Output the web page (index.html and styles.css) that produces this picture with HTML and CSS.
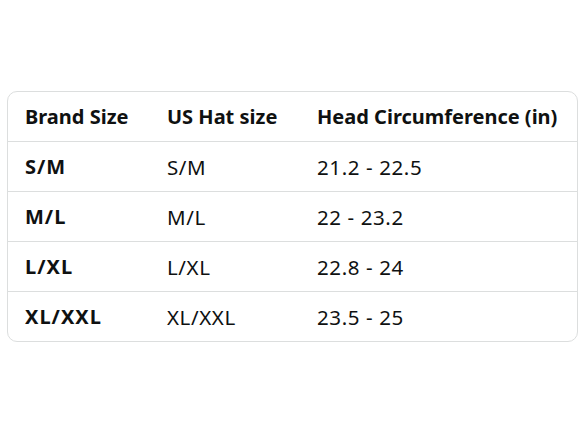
FILE: index.html
```html
<!DOCTYPE html>
<html>
<head>
<meta charset="utf-8">
<link rel="stylesheet" href="styles.css">
</head>
<body>
<div class="page">
  <div class="table">
    <div class="row head">
      <div class="cell">Brand Size</div>
      <div class="cell">US Hat size</div>
      <div class="cell">Head Circumference (in)</div>
    </div>
    <div class="row">
      <div class="cell b">S/M</div>
      <div class="cell">S/M</div>
      <div class="cell">21.2 - 22.5</div>
    </div>
    <div class="row">
      <div class="cell b">M/L</div>
      <div class="cell">M/L</div>
      <div class="cell">22 - 23.2</div>
    </div>
    <div class="row">
      <div class="cell b">L/XL</div>
      <div class="cell">L/XL</div>
      <div class="cell">22.8 - 24</div>
    </div>
    <div class="row last">
      <div class="cell b">XL/XXL</div>
      <div class="cell">XL/XXL</div>
      <div class="cell">23.5 - 25</div>
    </div>
  </div>
</div>
</body>
</html>
```
FILE: styles.css
```css
html, body {
  margin: 0;
  padding: 0;
  background: #ffffff;
}
.page {
  width: 588px;
  height: 441px;
  padding: 91px 10px 0 7px;
  box-sizing: border-box;
  font-family: "Noto Sans", "Open Sans", sans-serif;
  color: #0f1111;
}
.table {
  border: 1px solid #dcdede;
  border-radius: 10px;
  overflow: hidden;
}
.row {
  display: grid;
  grid-template-columns: 142px 150px 1fr;
  height: 49px;
  align-items: center;
  border-bottom: 1px solid #dcdede;
}
.row.last {
  border-bottom: none;
}
.cell {
  padding-left: 17px;
  font-size: 20.5px;
  letter-spacing: 0.6px;
  line-height: 26px;
  padding-top: 1px;
}
.head .cell {
  font-weight: 700;
  font-size: 20px;
  letter-spacing: 0;
}
.cell.b {
  font-weight: 700;
  font-size: 20px;
  letter-spacing: 1px;
}
```
